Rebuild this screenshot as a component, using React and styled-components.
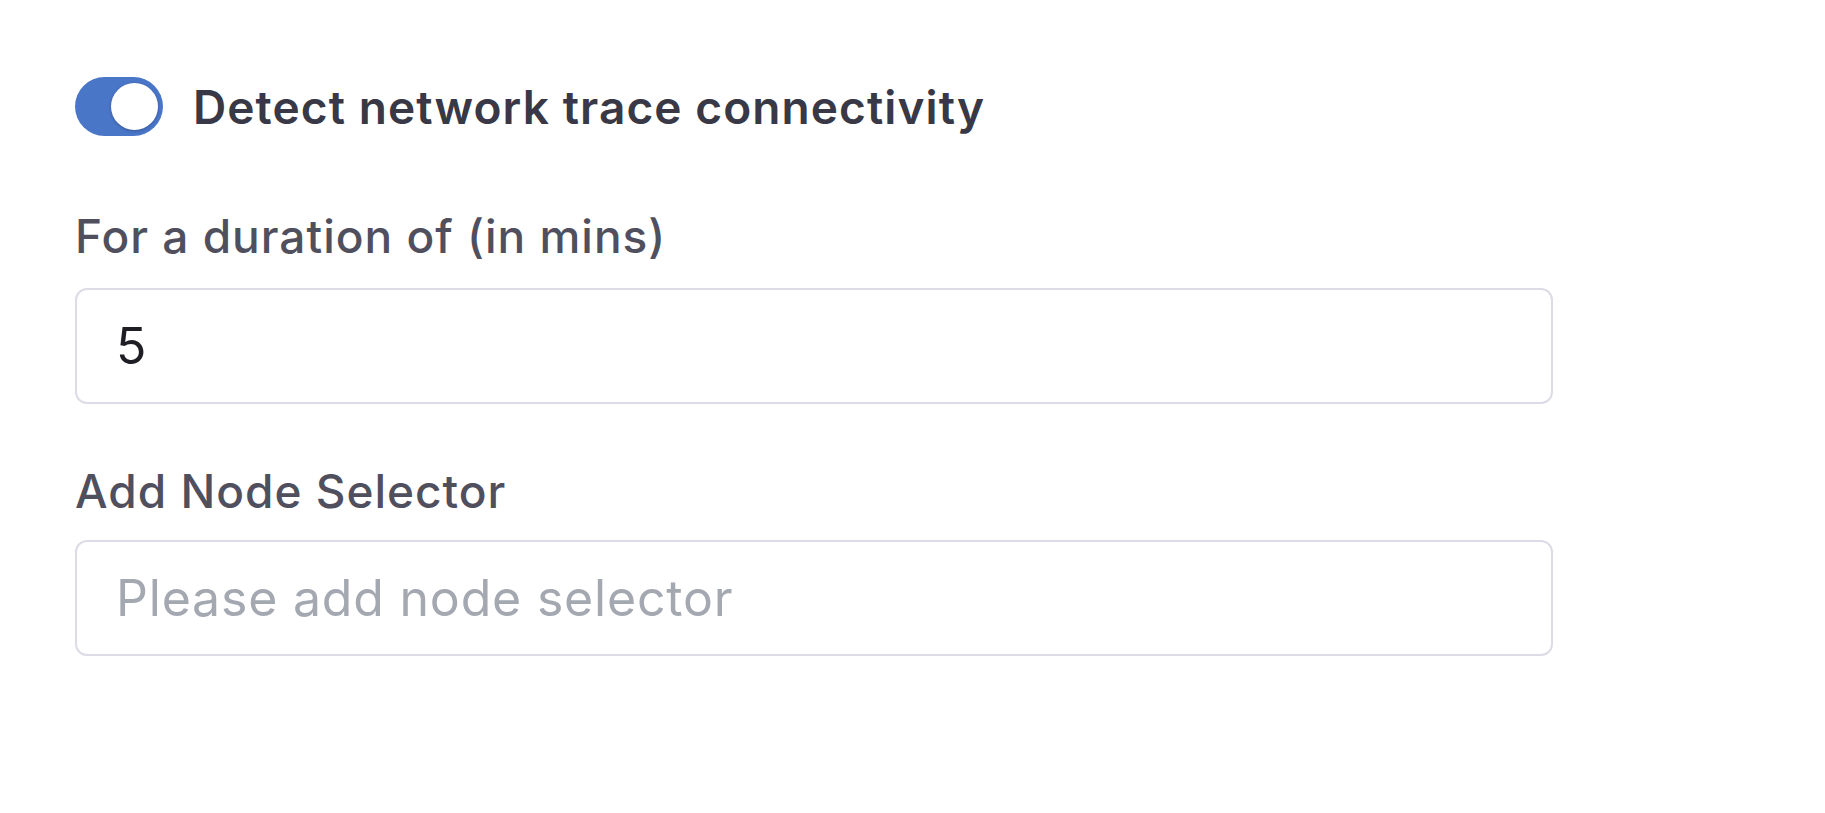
import React from "react";
import styled, { createGlobalStyle } from "styled-components";

const Global = createGlobalStyle`
  html, body { margin: 0; padding: 0; background: #ffffff; }
  body { font-family: Inter, "Noto Sans", sans-serif; }
`;

const Page = styled.div`
  padding: 77px 0 0 75px;
  width: 1478px;
  display: flex;
  flex-direction: column;
`;

const ToggleRow = styled.label`
  display: flex;
  align-items: center;
  gap: 30px;
  height: 59px;
`;

const Track = styled.span`
  flex: none;
  width: 88px;
  height: 59px;
  border-radius: 30px;
  background: ${(p) => (p.$on ? "#4a76c8" : "#d5d7de")};
  display: flex;
  align-items: center;
  justify-content: ${(p) => (p.$on ? "flex-end" : "flex-start")};
  padding: 0 5px;
  box-sizing: border-box;
`;

const Knob = styled.span`
  width: 47px;
  height: 47px;
  border-radius: 50%;
  background: #ffffff;
  box-shadow: 0 1px 3px rgba(20, 30, 60, 0.35);
`;

const Title = styled.span`
  font-size: 46px;
  font-weight: 600;
  color: #383846;
  letter-spacing: 1.1px;
`;

const Field = styled.div`
  display: flex;
  flex-direction: column;
  margin-top: ${(p) => p.$top}px;
`;

const Label = styled.div`
  font-size: 46px;
  font-weight: 500;
  color: #4f4f5e;
  line-height: 56px;
  letter-spacing: 1px;
`;

const Input = styled.input`
  margin-top: ${(p) => p.$gap}px;
  box-sizing: border-box;
  width: 100%;
  height: 116px;
  border: 2px solid #dcdce6;
  border-radius: 12px;
  padding: 0 39px;
  font-family: Inter, "Noto Sans", sans-serif;
  font-size: 50px;
  letter-spacing: 0.8px;
  color: #1e1e24;
  background: #fff;
  outline: none;
  &::placeholder {
    color: #a3a8b1;
  }
`;

export default function App() {
  return (
    <>
      <Global />
      <Page>
        <ToggleRow>
          <Track $on>
            <Knob />
          </Track>
          <Title>Detect network trace connectivity</Title>
        </ToggleRow>
        <Field $top={72}>
          <Label>For a duration of (in mins)</Label>
          <Input $gap={24} defaultValue="5" />
        </Field>
        <Field $top={59}>
          <Label>Add Node Selector</Label>
          <Input $gap={21} placeholder="Please add node selector" />
        </Field>
      </Page>
    </>
  );
}
